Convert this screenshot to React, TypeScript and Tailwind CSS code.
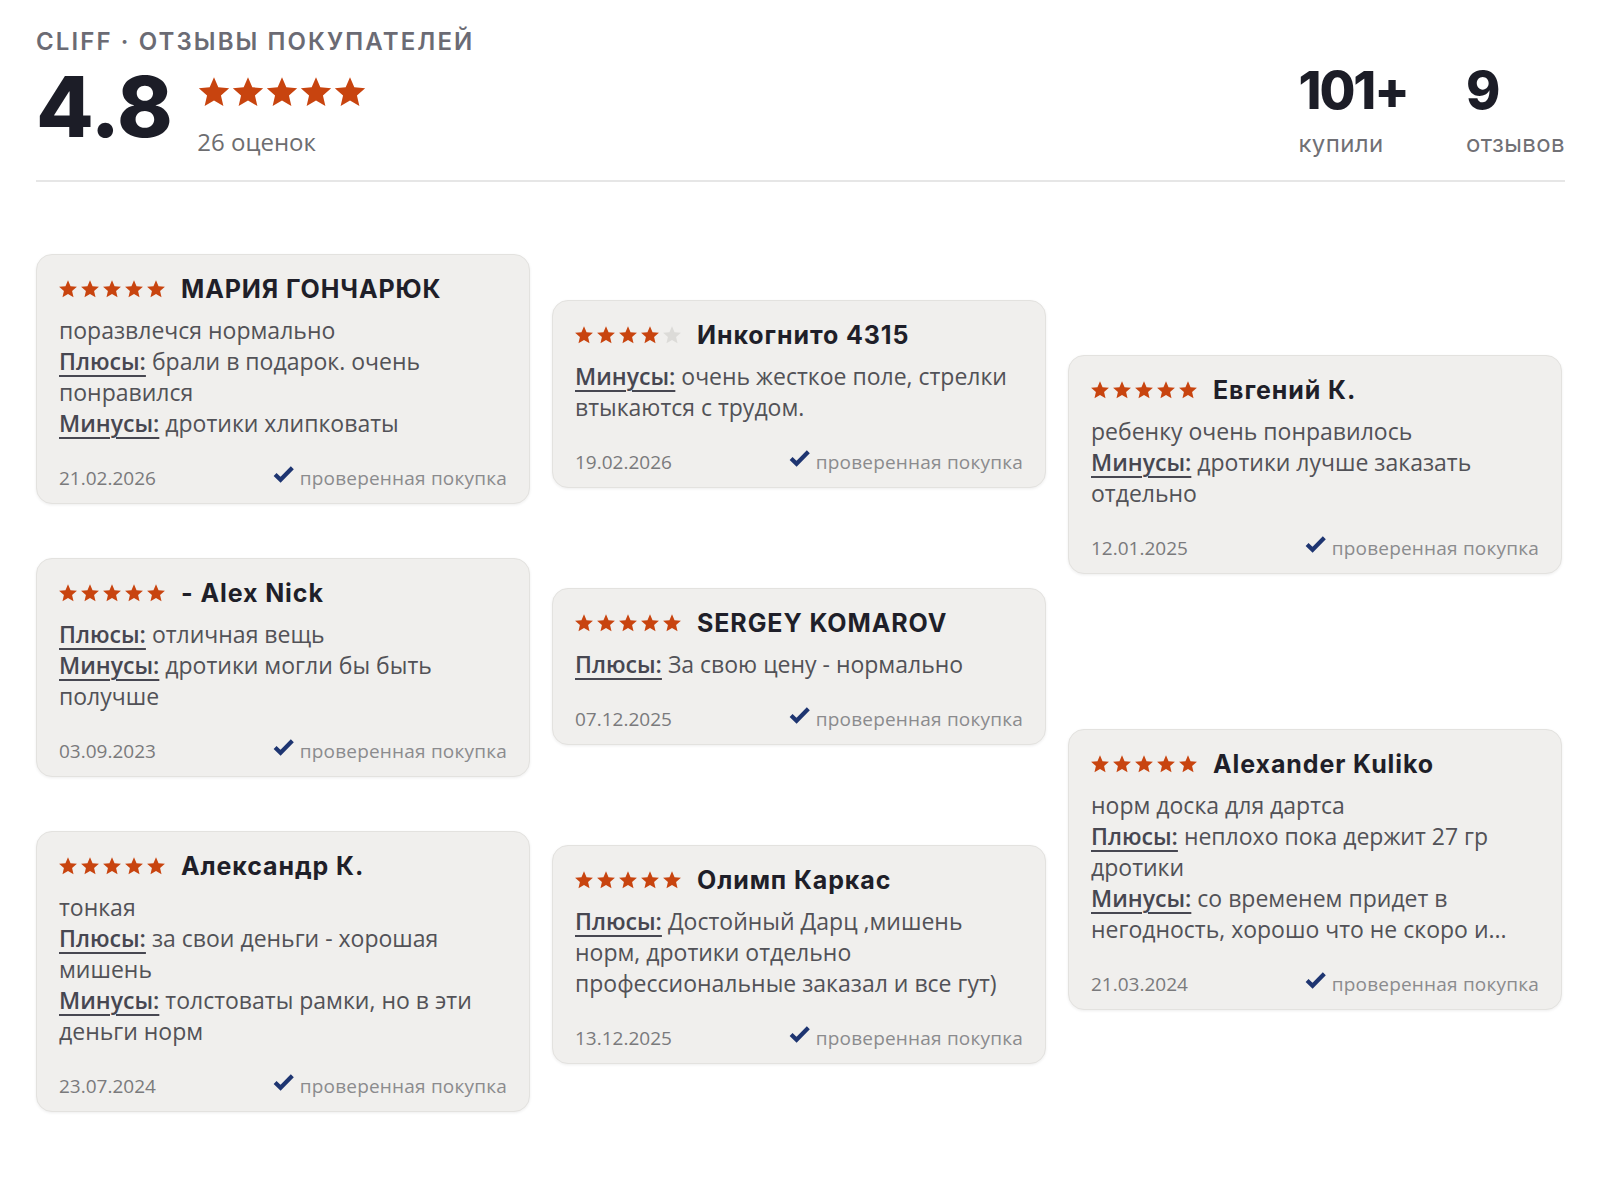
import type { ReactNode } from 'react'

type Review = {
    rating: number
    name: string
    text?: string
    pros?: string
    cons?: string
    date: string
}

// three columns, each one stacked top to bottom
const columns: { offset: string; reviews: Review[] }[] = [
    {
        offset: 'mt-[54px]',
        reviews: [
            { rating: 5, name: 'МАРИЯ ГОНЧАРЮК', text: 'поразвлечся нормально', pros: 'брали в подарок. очень понравился', cons: 'дротики хлипковаты', date: '21.02.2026' },
            { rating: 5, name: '- Alex Nick', pros: 'отличная вещь', cons: 'дротики могли бы быть получше', date: '03.09.2023' },
            { rating: 5, name: 'Александр К.', text: 'тонкая', pros: 'за свои деньги - хорошая мишень', cons: 'толстоваты рамки, но в эти деньги норм', date: '23.07.2024' },
        ],
    },
    {
        offset: 'mt-[100px]',
        reviews: [
            { rating: 4, name: 'Инкогнито 4315', cons: 'очень жесткое поле, стрелки втыкаются с трудом.', date: '19.02.2026' },
            { rating: 5, name: 'SERGEY KOMAROV', pros: 'За свою цену - нормально', date: '07.12.2025' },
            { rating: 5, name: 'Олимп Каркас', pros: 'Достойный Дарц ,мишень норм, дротики отдельно профессиональные заказал и все гут)', date: '13.12.2025' },
        ],
    },
    {
        offset: 'mt-[155px]',
        reviews: [
            { rating: 5, name: 'Евгений К.', text: 'ребенку очень понравилось', cons: 'дротики лучше заказать отдельно', date: '12.01.2025' },
            { rating: 5, name: 'Alexander Kuliko', text: 'норм доска для дартса', pros: 'неплохо пока держит 27 гр дротики', cons: 'со временем придет в негодность, хорошо что не скоро и...', date: '21.03.2024' },
        ],
    },
]

const STAR = 'M12 1.6l3.05 7.05 7.65.7-5.8 5.05 1.72 7.5L12 17.95 5.38 21.9l1.72-7.5-5.8-5.05 7.65-.7z'

function Stars({ value, starClass, gapClass }: { value: number; starClass: string; gapClass: string }) {
    return (
        <div className={`flex shrink-0 items-center ${gapClass}`}>
            {[1, 2, 3, 4, 5].map(i => (
                <svg key={i} viewBox="0 0 24 24" className={starClass}>
                    <path d={STAR} fill={i <= value ? '#c8440f' : '#dcdbd8'} />
                </svg>
            ))}
        </div>
    )
}

function Label({ children }: { children: ReactNode }) {
    return (
        <span className="font-semibold text-[#474751] underline decoration-2 underline-offset-[5px]">{children}</span>
    )
}

function ReviewCard({ review }: { review: Review }) {
    return (
        <div className="rounded-[16px] border border-[#e3e2df] bg-[#f0efed] pl-[21px] pr-[22px] pt-[18px] pb-[12px] shadow-[0_1px_3px_rgba(0,0,0,0.07)]">
            <div className="flex items-center gap-[15px]">
                <Stars value={review.rating} starClass="w-[20px] h-[20px]" gapClass="gap-[2px]" />
                <span className="font-['Inter',sans-serif] text-[25px] font-bold leading-[32px] tracking-[0.9px] text-[#1f1f29]">
                    {review.name}
                </span>
            </div>
            <div className="mt-[10px] pl-[1px] font-['Open_Sans',sans-serif] text-[23px] leading-[31px] text-[#525257]">
                {review.text && <p>{review.text}</p>}
                {review.pros && (
                    <p>
                        <Label>Плюсы:</Label> {review.pros}
                    </p>
                )}
                {review.cons && (
                    <p>
                        <Label>Минусы:</Label> {review.cons}
                    </p>
                )}
            </div>
            <div className="mt-[26px] flex h-[26px] items-center justify-between pl-[1px] font-['Open_Sans',sans-serif] text-[19px]">
                <span className="text-[#7a7a7c]">{review.date}</span>
                <span className="flex items-center gap-[6px] text-[#8b8b8d] tracking-[0.2px]">
                    <svg viewBox="0 0 20 16" className="w-[21px] h-[17px] -translate-y-[4px]">
                        <path d="M2 8 L7.2 13 L18.4 1.6" fill="none" stroke="#1e3571" strokeWidth="4" strokeLinejoin="miter" />
                    </svg>
                    проверенная покупка
                </span>
            </div>
        </div>
    )
}

export default function App() {
    return (
        <div className="min-h-screen bg-white pl-[36px] pr-[38px] pt-[27px] pb-[80px]">
            <header className="border-b-2 border-[#e6e6e6] pb-[21px] -mr-[3px]">
                <h2 className="font-['Inter',sans-serif] text-[24px] font-semibold leading-[30px] tracking-[2.1px] text-[#6b6b74]">
                    CLIFF · ОТЗЫВЫ ПОКУПАТЕЛЕЙ
                </h2>
                <div className="mt-[8px] flex items-start justify-between">
                    <div className="flex items-start gap-[25px]">
                        <span className="font-['Inter',sans-serif] text-[84px] font-extrabold leading-none tracking-[-0.5px] text-[#1c1d27]">
                            4.8
                        </span>
                        <div className="pt-[10px]">
                            <Stars value={5} starClass="w-[34px] h-[34px]" gapClass="gap-[0px]" />
                            <p className="mt-[17px] font-['Open_Sans',sans-serif] text-[24px] leading-[31px] text-[#6d6d70]">
                                26 оценок
                            </p>
                        </div>
                    </div>
                    <div className="flex gap-[58px]">
                        <div>
                            <p className="font-['Inter',sans-serif] text-[52px] font-extrabold leading-none tracking-[-2px] text-[#1c1d27]">101+</p>
                            <p className="mt-[11px] font-['Inter',sans-serif] text-[24px] leading-[31px] tracking-[0.4px] text-[#707075]">купили</p>
                        </div>
                        <div>
                            <p className="font-['Inter',sans-serif] text-[52px] font-extrabold leading-none text-[#1c1d27]">9</p>
                            <p className="mt-[11px] font-['Inter',sans-serif] text-[24px] leading-[31px] tracking-[0.4px] text-[#707075]">отзывов</p>
                        </div>
                    </div>
                </div>
            </header>
            <main className="grid grid-cols-3 items-start gap-x-[22px] pt-[18px]">
                {columns.map((col, ci) => (
                    <div key={ci} className="flex flex-col">
                        {col.reviews.map((r, ri) => (
                            <div key={ri} className={col.offset}>
                                <ReviewCard review={r} />
                            </div>
                        ))}
                    </div>
                ))}
            </main>
        </div>
    )
}
